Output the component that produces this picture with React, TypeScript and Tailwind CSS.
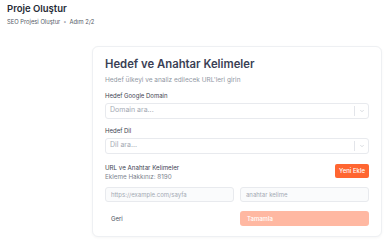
import { ChevronDown } from "lucide-react";

function SelectBox({ placeholder }: { placeholder: string }) {
	return (
		<div className="flex h-[16px] items-center rounded-[3px] border border-[#e8eaee] bg-white">
			<span className="flex-1 pl-[4px] text-[7px] text-[#a3a9b3]">{placeholder}</span>
			<span className="h-[10px] w-px bg-[#e3e5ea]" />
			<span className="flex w-[13px] items-center justify-center text-[#b5bac3]">
				<ChevronDown size={6} strokeWidth={2} />
			</span>
		</div>
	);
}

export default function App() {
	return (
		<div className="h-[242px] w-[392px] bg-white font-['Inter',sans-serif] text-[#2f3441]">
			<div className="px-[7px] pt-[3px]">
				<h1 className="text-[9.5px] font-semibold leading-[12px] text-[#262b36]">Proje Oluştur</h1>
				<div className="mt-[3px] flex items-center gap-[3px] text-[5.8px] text-[#555b66]">
					<span>SEO Projesi Oluştur</span>
					<span className="text-[#9aa0aa]">•</span>
					<span>Adım 2/2</span>
				</div>
			</div>

			<div className="ml-[92px] mt-[19px] w-[290px] rounded-[6px] border border-[#eef0f3] bg-white px-[12px] pb-[10px] pt-[10px] shadow-[0_1px_3px_rgba(0,0,0,0.04)]">
				<h2 className="text-[11.3px] font-semibold leading-[14px] text-[#3a3f55]">Hedef ve Anahtar Kelimeler</h2>
				<p className="mt-[5px] text-[6.5px] leading-[9px] text-[#9097a3]">
					Hedef ülkeyi ve analiz edilecek URL'leri girin
				</p>

				<div className="mt-[7px] text-[6px] leading-[8px] text-[#3d4250]">Hedef Google Domain</div>
				<div className="mt-[3px]">
					<SelectBox placeholder="Domain ara..." />
				</div>

				<div className="mt-[8px] text-[6px] leading-[8px] text-[#3d4250]">Hedef Dil</div>
				<div className="mt-[3px]">
					<SelectBox placeholder="Dil ara..." />
				</div>

				<div className="mt-[10px] flex items-start justify-between">
					<div>
						<div className="text-[6.2px] leading-[8px] text-[#3d4250]">URL ve Anahtar Kelimeler</div>
						<div className="mt-[1px] text-[6.3px] leading-[8px] text-[#7d838e]">Ekleme Hakkınız: 8190</div>
					</div>
					<button className="h-[14px] w-[34px] rounded-[2px] bg-[#ff6631] text-[6px] font-medium text-white">
						Yeni Ekle
					</button>
				</div>

				<div className="mt-[6px] grid grid-cols-2 gap-[6px]">
					<div className="flex h-[15px] items-center rounded-[3px] border border-[#e8eaee] bg-[#fafbfc] pl-[5px] text-[6px] text-[#a3a9b3]">
						https://example.com/sayfa
					</div>
					<div className="flex h-[15px] items-center rounded-[3px] border border-[#e8eaee] bg-[#fafbfc] pl-[5px] text-[6px] text-[#a3a9b3]">
						anahtar kelime
					</div>
				</div>

				<div className="mt-[9px] grid grid-cols-2 gap-[6px]">
					<div className="flex h-[15px] items-center pl-[6px] text-[6px] text-[#4a505c]">Geri</div>
					<button className="h-[15px] rounded-[3px] bg-[#ffb8a2] pl-[7px] text-left text-[6px] font-medium text-white">
						Tamamla
					</button>
				</div>
			</div>
		</div>
	);
}
